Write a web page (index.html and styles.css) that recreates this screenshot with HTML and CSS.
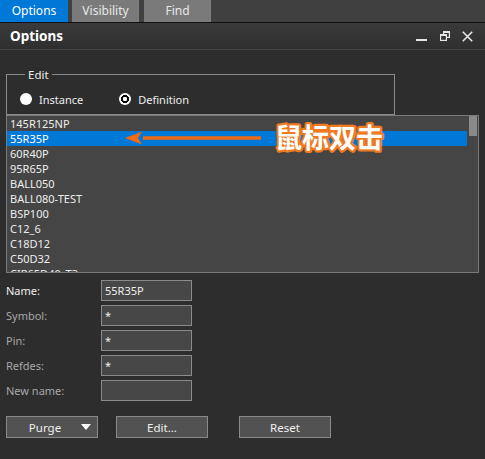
FILE: index.html
```html
<!DOCTYPE html>
<html lang="en">
<head>
  <meta charset="UTF-8" />
  <title>Options</title>
  <link rel="stylesheet" href="styles.css">
</head>
<body>
  <div class="tabbar">
    <div class="tab active">Options</div>
    <div class="tab">Visibility</div>
    <div class="tab">Find</div>
  </div>

  <div class="titlebar">
    <span class="title">Options</span>
    <div class="win-btns">
      <svg width="12" height="12" viewBox="0 0 12 12"><rect x="0" y="9" width="11" height="2" fill="#e6e6e6"/></svg>
      <svg width="10" height="10" viewBox="0 0 10 10" fill="none" stroke="#e6e6e6" stroke-width="1.2">
        <rect x="0.6" y="3.6" width="5.8" height="5.8"/>
        <path d="M3.6 3.6V0.6h5.8v5.8H6.4"/>
        <path d="M0.6 4.4h5.8M3.6 1.4h5.8"/>
      </svg>
      <svg width="11" height="11" viewBox="0 0 11 11" stroke="#e6e6e6" stroke-width="1.6"><path d="M0.8 0.8l9.4 9.4M10.2 0.8l-9.4 9.4"/></svg>
    </div>
  </div>

  <div class="content">
    <fieldset class="edit-group">
      <legend>Edit</legend>
      <label class="radio"><span class="dot"></span>Instance</label>
      <label class="radio"><span class="dot checked"></span>Definition</label>
    </fieldset>

    <div class="listbox">
      <div class="rows">
        <div class="row">145R125NP</div>
        <div class="row selected">55R35P</div>
        <div class="row">60R40P</div>
        <div class="row">95R65P</div>
        <div class="row">BALL050</div>
        <div class="row">BALL080-TEST</div>
        <div class="row">BSP100</div>
        <div class="row">C12_6</div>
        <div class="row">C18D12</div>
        <div class="row">C50D32</div>
        <div class="row">CIR65D40_T3</div>
      </div>
      <div class="scrollbar"><div class="thumb"></div></div>

      <!-- annotation overlay -->
      <svg class="arrow" width="140" height="14" viewBox="0 0 140 14">
        <path d="M18 5.2H136v3.6H18z" fill="#f26a12"/>
        <path d="M0 7L17 0.5L13 7L17 13.5Z" fill="#f26a12"/>
      </svg>
      <svg class="note" width="124" height="42" viewBox="0 0 124 42">
        <text x="3" y="31" class="note-text">鼠标双击</text>
      </svg>
    </div>

    <div class="fields">
      <label class="field-label main">Name:</label>
      <div class="input">55R35P</div>
      <label class="field-label">Symbol:</label>
      <div class="input">*</div>
      <label class="field-label">Pin:</label>
      <div class="input">*</div>
      <label class="field-label">Refdes:</label>
      <div class="input">*</div>
      <label class="field-label">New name:</label>
      <div class="input"></div>
    </div>

    <div class="buttons">
      <button class="btn purge">Purge<span class="caret"></span></button>
      <button class="btn edit">Edit...</button>
      <button class="btn reset">Reset</button>
    </div>
  </div>
</body>
</html>
```

FILE: styles.css
```css
body {
  margin: 0;
  width: 485px;
  height: 459px;
  background: #2d2d2d;
  font-family: "Noto Sans", "Open Sans", sans-serif;
  font-size: 11px;
  color: #eeeeee;
  overflow: hidden;
}

.tabbar {
  display: flex;
  height: 22px;
  background: #404040;
  border-bottom: 1px solid #111111;
}

.tab {
  width: 67px;
  margin-right: 5px;
  background: #7a7a7a;
  color: #e8e8e8;
  text-align: center;
  line-height: 22px;
  font-size: 12px;
}

.tab.active {
  width: 68px;
  margin-right: 4px;
  background: #0078d7;
  color: #ffffff;
}

.titlebar {
  display: flex;
  align-items: center;
  justify-content: space-between;
  height: 26px;
  padding: 0 12px 0 10px;
  background: linear-gradient(#3a3a3a, #2f2f2f);
  border-bottom: 1px solid #454545;
}

.title {
  font-weight: bold;
  font-size: 13.5px;
  color: #ffffff;
}

.win-btns {
  display: flex;
  align-items: center;
  gap: 12px;
}

.content {
  padding: 0 6px;
}

.edit-group {
  width: 374px;
  margin: 17px 0 0 0;
  padding: 9px 0 7px 13px;
  border: 1px solid #8a8a8a;
  display: flex;
  gap: 36px;
}

.edit-group legend {
  padding: 0 3px;
  margin-left: 5px;
  font-size: 11.5px;
  color: #eeeeee;
}

.radio {
  display: flex;
  align-items: center;
  gap: 7px;
  height: 16px;
}

.dot {
  width: 12px;
  height: 12px;
  border-radius: 50%;
  background: #ffffff;
}

.dot.checked {
  background: radial-gradient(circle, #ffffff 0 2px, #000000 2.4px 3.8px, #ffffff 4.2px);
}

.listbox {
  position: relative;
  display: flex;
  height: 156px;
  border: 1px solid #7a7a7a;
  background: #454545;
  overflow: hidden;
}

.rows {
  flex: 1;
}

.row {
  height: 15px;
  line-height: 15px;
  padding-left: 3px;
  white-space: nowrap;
}

.row.selected {
  background: #0078d7;
  color: #ffffff;
}

.scrollbar {
  width: 11px;
  padding-left: 2px;
  box-sizing: border-box;
}

.thumb {
  width: 8px;
  height: 20px;
  background: #8a8a8a;
}

.arrow {
  position: absolute;
  left: 118px;
  top: 15px;
}

.note {
  position: absolute;
  left: 265px;
  top: 1px;
}

.note-text {
  font-family: "Noto Sans CJK SC", sans-serif;
  font-weight: bold;
  font-size: 27px;
  fill: #ffffff;
  stroke: #f07a22;
  stroke-width: 4.5px;
  stroke-linejoin: round;
  paint-order: stroke;
}

.fields {
  display: grid;
  grid-template-columns: 95px 91px;
  row-gap: 4px;
  margin-top: 7px;
  align-items: center;
}

.field-label {
  color: #a8a8a8;
}

.field-label.main {
  color: #f0f0f0;
}

.input {
  height: 19px;
  line-height: 19px;
  padding-left: 3px;
  background: #474747;
  border: 1px solid #8a8a8a;
  color: #eeeeee;
}

.buttons {
  display: flex;
  margin-top: 15px;
}

.btn {
  position: relative;
  width: 92px;
  height: 22px;
  background: #525252;
  border: 1px solid #8a8a8a;
  color: #f0f0f0;
  font-family: "Noto Sans", "Open Sans", sans-serif;
  font-size: 11.5px;
  padding: 0;
}

.btn.purge {
  padding-right: 14px;
}

.btn.edit {
  margin-left: 18px;
}

.btn.reset {
  margin-left: 31px;
}

.caret {
  position: absolute;
  right: 6px;
  top: 7px;
  border-left: 5px solid transparent;
  border-right: 5px solid transparent;
  border-top: 6px solid #ffffff;
}
```
